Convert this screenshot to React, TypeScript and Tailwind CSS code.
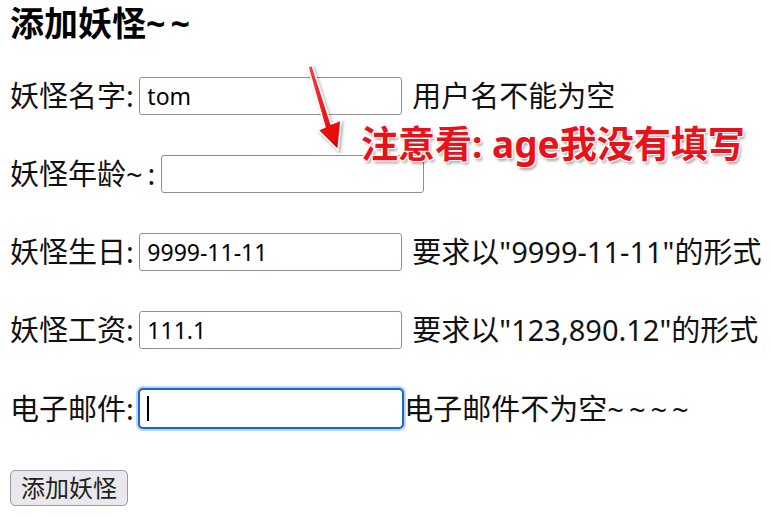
const font = 'font-["Noto_Sans","Noto_Sans_CJK_SC",sans-serif]'

// tildes in the original are wider and spaced out
function Tilde({ n }: { n: number }) {
  return <span className="tracking-[5px]">{'~'.repeat(n)}</span>
}

function Row({ label, tilde, value, hint }: { label: string; tilde?: boolean; value?: string; hint: string }) {
  return (
    <div className="flex h-[39px] items-center text-[29px] leading-none text-[#111]">
      <span className="whitespace-pre">
        {label}
        {tilde && <Tilde n={1} />}:{' '}
      </span>
      <input
        readOnly
        defaultValue={value}
        className="-ml-[2px] h-[38px] w-[263px] rounded-[3px] border border-[#8f8f8f] bg-white px-[7px] text-[23px] text-black outline-none"
      />
      <span className="ml-[10px]">{hint}</span>
    </div>
  )
}

export default function App() {
  return (
    <div className={`relative min-h-screen bg-white pl-[10px] pt-[3px] ${font}`}>
      {/* Title */}
      <h3 className="text-[34px] font-bold leading-[40px] text-black">
        添加妖怪<Tilde n={2} />
      </h3>

      <div className="mt-[33px] flex flex-col gap-[39px]">
        <Row label="妖怪名字" value="tom" hint="用户名不能为空" />
        <Row label="妖怪年龄" tilde hint="" />
        <Row label="妖怪生日" value="9999-11-11" hint={'要求以"9999-11-11"的形式'} />
        <Row label="妖怪工资" value="111.1" hint={'要求以"123,890.12"的形式'} />

        {/* Focused email field */}
        <div className="flex h-[41px] items-center text-[29px] leading-none text-[#111]">
          <span className="whitespace-pre">电子邮件: </span>
          <div className="relative -ml-[3px]">
            <input
              readOnly
              className="h-[41px] w-[266px] rounded-[5px] border-2 border-[#1a64d0] bg-white px-[7px] text-[23px] outline-none ring-2 ring-[#b9d7f5]"
            />
            <span className="absolute left-[9px] top-[8px] h-[25px] w-[1.5px] bg-black" />
          </div>
          <span>
            电子邮件不为空<Tilde n={4} />
          </span>
        </div>
      </div>

      <button className="mt-[41px] h-[36px] rounded-[5px] border border-[#9a9aa5] bg-[#e9e9ed] px-[10px] text-[24px] leading-none text-[#222]">
        添加妖怪
      </button>

      {/* Annotation overlay */}
      <svg className="absolute left-[300px] top-[60px]" width="50" height="100" viewBox="0 0 50 100">
        <defs>
          <linearGradient id="ar" x1="0" y1="0" x2="0" y2="1">
            <stop offset="0" stopColor="#ff3b3b" />
            <stop offset="1" stopColor="#e00000" />
          </linearGradient>
          <filter id="sh" x="-50%" y="-50%" width="200%" height="200%">
            <feDropShadow dx="1.5" dy="2" stdDeviation="1.5" floodColor="#000" floodOpacity="0.35" />
          </filter>
        </defs>
        <polygon
          points="8,7 12,5 31,64 41,60 38,90 18,70 25,67"
          fill="url(#ar)"
          stroke="#fff"
          strokeWidth="1.5"
          strokeLinejoin="round"
          filter="url(#sh)"
        />
      </svg>
      <div className="absolute left-[361px] top-[120px] whitespace-nowrap text-[37px] font-bold leading-[48px] text-[#e8121a] [text-shadow:0_0_2px_#fff,1px_1px_0_#fff,-1px_-1px_0_#fff,1px_-1px_0_#fff,-1px_1px_0_#fff,2px_3px_3px_rgba(0,0,0,0.35)]">
        注意看: age我没有填写
      </div>
    </div>
  )
}
